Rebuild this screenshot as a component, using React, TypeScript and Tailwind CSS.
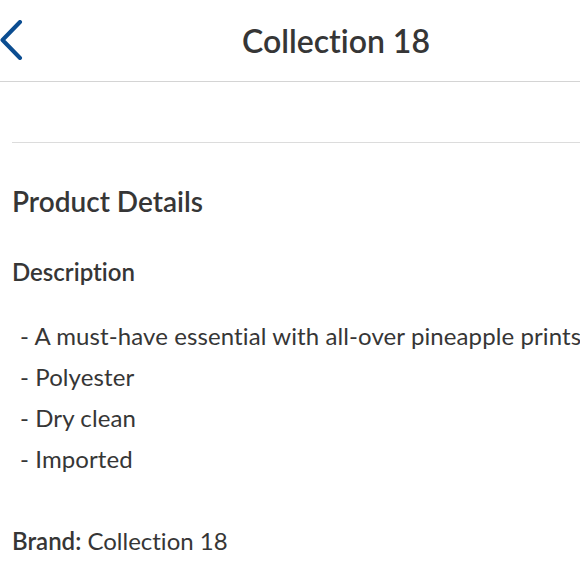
import React from 'react';

const bullets = [
  'A must-have essential with all-over pineapple prints',
  'Polyester',
  'Dry clean',
  'Imported',
];

export default function App() {
  return (
    <div className="w-[580px] h-[580px] overflow-hidden bg-white text-[#363636] font-['Lato',sans-serif] [font-variant-ligatures:none]">
      <div className="w-[672px]">
        {/* Header */}
        <div className="relative h-[82px] border-b border-[#d4d4d4] flex items-center justify-center">
          <button className="absolute left-0 top-[20px]">
            <svg width="24" height="40" viewBox="0 0 24 40" fill="none">
              <path d="M20 2 L2.5 20 L20 38" stroke="#0b4d91" strokeWidth="4" strokeLinecap="round" strokeLinejoin="round" />
            </svg>
          </button>
          <h1 className="text-[32px] font-semibold">Collection 18</h1>
        </div>

        <div className="ml-3 mt-[60px] border-t border-[#dcdcdc]" />

        {/* Product details */}
        <div className="pl-3 pt-[44px]">
          <h2 className="text-[28px] font-semibold leading-none">Product Details</h2>
          <h3 className="mt-[45px] text-[24px] font-semibold leading-none">Description</h3>
          <ul className="mt-[31px] pl-2 text-[24px] leading-[41px] tracking-[0.1px]">
            {bullets.map((b) => (
              <li key={b} className="whitespace-nowrap">- {b}</li>
            ))}
          </ul>
          <p className="mt-[50px] text-[24px] leading-none">
            <span className="font-semibold">Brand:</span> Collection 18
          </p>
        </div>
      </div>
    </div>
  );
}
